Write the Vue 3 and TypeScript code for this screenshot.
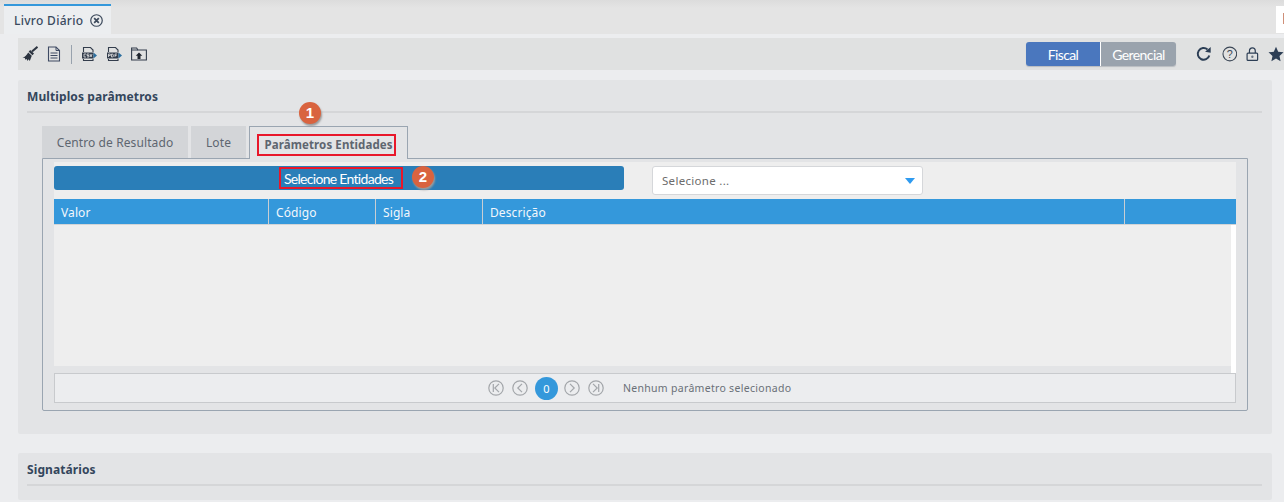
<script setup lang="ts">
const columns: { label: string; width: string }[] = [
  { label: 'Valor', width: '215px' },
  { label: 'Código', width: '107px' },
  { label: 'Sigla', width: '107px' },
  { label: 'Descrição', width: '642px' },
  { label: '', width: '1fr' },
]
const gridColumns = columns.map((c) => c.width).join(' ')
</script>

<template>
  <div class="app">
    <header class="topbar">
      <div class="tab-doc">
        <span>Livro Diário</span>
        <svg class="close" viewBox="0 0 14 14" width="13" height="13">
          <circle cx="7" cy="7" r="6.2" fill="none" stroke="#3d4a5c" stroke-width="1.3" />
          <path d="M4.5 4.500l5 5M9.500 4.500l-5 5" stroke="#3d4a5c" stroke-width="1.900" />
        </svg>
      </div>
      <div class="peek"><i></i></div>
    </header>

    <main class="content">
      <div class="toolbar">
        <div class="tools">
          <svg viewBox="0 0 16 16" width="16" height="16" class="t1">
            <path d="M15.500 .8l-5.500 4.700" stroke="#2c3440" stroke-width="2" fill="none" />
            <path d="M8.200 4l3.800 3.600-1.500 1.700-3.800-3.600z" fill="#2c3440" />
            <path d="M6.200 6.400l3.600 3.300-2 5.300-1.300-1.800-.9 1.700-1-1.900-1.300.8-.4-1.700L.5 11.600c2.600-.6 4.300-2.800 5.700-5.200z" fill="#2c3440" />
          </svg>
          <svg viewBox="0 0 14 16" width="14" height="16" class="t2">
            <path d="M1.500 1h7.500l3.500 3.500V15h-11z" fill="none" stroke="#3e4a63" stroke-width="1.100" />
            <path d="M9 1v3.500h3.500M3.500 7h7M3.500 9.500h7M3.500 12h7" fill="none" stroke="#3e4a63" stroke-width="1" />
          </svg>
          <span class="sep"></span>
          <svg viewBox="0 0 16 16" width="16" height="16" class="t3">
            <path d="M2.500 6V1.500h7l2.500 2.500v2M2.500 13v1.500h9.500V13" fill="none" stroke="#333d4c" stroke-width="1.100" />
            <rect x="1" y="6.500" width="11.500" height="6" fill="#333d4c" />
            <path d="M12.500 6.500L16 9.500l-3.500 3z" fill="#2d6f9f" />
            <path d="M5 8H3v3h2M8 8H6v1.500h2V11H6M9 8l1 3 1-3" stroke="#e4e5e5" stroke-width=".8" fill="none" />
          </svg>
          <svg viewBox="0 0 16 16" width="16" height="16" class="t4">
            <path d="M2.500 6V1.500h7l2.500 2.500v2M2.500 13v1.500h9.500V13" fill="none" stroke="#333d4c" stroke-width="1.100" />
            <rect x="1" y="6.500" width="11.500" height="6" fill="#333d4c" />
            <path d="M12.500 6.500L16 9.500l-3.500 3z" fill="#2d6f9f" />
            <path d="M2.500 11V8h1.800v1.500H2.500M5.500 8v3h1.300l.7-1-.7-2zM9 11V8h2M9 9.500h1.600" stroke="#e4e5e5" stroke-width=".8" fill="none" />
          </svg>
          <svg viewBox="0 0 16 14" width="16" height="14" class="t5">
            <path d="M.6 1h5l1.400 2h8.400v10H.6z" fill="none" stroke="#333d4c" stroke-width="1.100" />
            <path d="M.6 3h6.400" stroke="#333d4c" stroke-width="1" />
            <path d="M8 5.500l3.300 3.300H9.500V12h-3V8.800H4.700z" fill="#20262f" />
          </svg>
        </div>
        <div class="actions">
          <div class="switch">
            <button class="sw fiscal" type="button">Fiscal</button>
            <button class="sw gerencial" type="button">Gerencial</button>
          </div>
          <svg viewBox="0 0 16 16" width="16" height="16" class="refresh">
            <path d="M13.600 9.500A6 6 0 1 1 11.800 3.400" fill="none" stroke="#2c3e55" stroke-width="2" />
            <path d="M9.300 5.800L15 6.600 15 .8z" fill="#2c3e55" />
          </svg>
          <svg viewBox="0 0 16 16" width="16" height="16" class="help">
            <circle cx="8" cy="8" r="7" fill="none" stroke="#3a4655" stroke-width="1.100" />
            <text x="8" y="11.800" text-anchor="middle" class="qm">?</text>
          </svg>
          <svg viewBox="0 0 14 16" width="13" height="16" class="lock">
            <path d="M3.800 7V4.500a3.200 3.200 0 0 1 6.400 0V7" fill="none" stroke="#2c3e55" stroke-width="1.300" />
            <rect x="1.200" y="7" width="11.600" height="8" rx="1" fill="none" stroke="#2c3e55" stroke-width="1.300" />
            <circle cx="7" cy="11" r="1.300" fill="#6a7583" />
          </svg>
          <svg viewBox="0 0 16 16" width="16" height="16" class="star">
            <path d="M8 .8l2.200 4.900 5.300.6-4 3.600 1.100 5.300L8 12.500l-4.600 2.700 1.100-5.300-4-3.600 5.300-.6z" fill="#2c3e55" />
          </svg>
        </div>
      </div>

      <section class="panel first">
        <h2 class="panel-title">Multiplos parâmetros</h2>

        <div class="tabs-wrap">
          <span class="badge b1">1</span>
          <div class="tabs">
            <div class="tab t-centro">Centro de Resultado</div>
            <div class="tab t-lote">Lote</div>
            <div class="tab active"><span class="marked">Parâmetros Entidades</span></div>
          </div>

          <div class="tab-body">
            <div class="inner">
              <div class="controls">
                <button class="select-btn" type="button">
                  <span class="marked-btn">Selecione Entidades</span>
                  <span class="badge b2">2</span>
                </button>
                <div class="dropdown">
                  <span>Selecione ...</span>
                  <i class="caret"></i>
                </div>
              </div>

              <div class="thead" :style="{ gridTemplateColumns: gridColumns }">
                <div v-for="c in columns" :key="c.label" class="th">{{ c.label }}</div>
              </div>

              <div class="tbody">
                <div class="rows">
                  <div class="empty"></div>
                  <div class="hscroll"></div>
                </div>
                <div class="vscroll"></div>
              </div>

              <div class="pager">
                <svg viewBox="0 0 16 16" width="16" height="16" class="pg">
                  <circle cx="8" cy="8" r="7.200" />
                  <path d="M5.300 4v8M11 3.800L6.800 8l4.200 4.200" />
                </svg>
                <svg viewBox="0 0 16 16" width="16" height="16" class="pg">
                  <circle cx="8" cy="8" r="7.200" />
                  <path d="M10 3.800L5.800 8l4.200 4.200" />
                </svg>
                <span class="page">0</span>
                <svg viewBox="0 0 16 16" width="16" height="16" class="pg">
                  <circle cx="8" cy="8" r="7.200" />
                  <path d="M6 3.800L10.200 8 6 12.200" />
                </svg>
                <svg viewBox="0 0 16 16" width="16" height="16" class="pg">
                  <circle cx="8" cy="8" r="7.200" />
                  <path d="M10.700 4v8M5 3.800L9.200 8 5 12.200" />
                </svg>
                <span class="pager-text">Nenhum parâmetro selecionado</span>
              </div>
            </div>
          </div>
        </div>
      </section>

      <section class="panel second">
        <h2 class="panel-title">Signatários</h2>
      </section>
    </main>
  </div>
</template>

<style>
html,
body {
  margin: 0;
  background: #ecedef;
  overflow: hidden;
}
</style>

<style scoped>
.app {
  width: 1284px;
  height: 502px;
  overflow: hidden;
  font-family: "Noto Sans", "Open Sans", sans-serif;
  background: #ecedef;
  display: flex;
  flex-direction: column;
}
.topbar {
  height: 34px;
  flex: none;
  background: linear-gradient(#dcdcdc, #e4e4e4 8px);
  padding: 4px 0 0 4px;
  box-sizing: border-box;
  display: flex;
  justify-content: space-between;
  align-items: flex-start;
}
.tab-doc {
  width: 107px;
  height: 30px;
  box-sizing: border-box;
  border-top: 2px solid #3498db;
  background: #eceef0;
  padding: 1px 0 0 10px;
  display: flex;
  align-items: center;
  gap: 7px;
  font-size: 12px;
  font-weight: 500;
  color: #3a4a5e;
  letter-spacing: 0.3px;
}
.close {
  flex: none;
}
.peek {
  width: 8px;
  height: 27px;
  margin-top: 2px;
  background: #fff;
  position: relative;
}
.peek i {
  position: absolute;
  right: 0;
  top: 7px;
  width: 1px;
  height: 11px;
  background: #cf8f78;
}
.content {
  flex: 1;
  min-height: 0;
  margin-left: 4px;
  padding: 4px 0 0 14px;
  background: #ecedef;
}
.toolbar {
  height: 32px;
  background: #e0e1e1;
  display: flex;
  justify-content: space-between;
  align-items: center;
  overflow: hidden;
}
.tools {
  display: flex;
  align-items: center;
  padding-left: 4px;
}
.t2 {
  margin-left: 9px;
}
.sep {
  width: 1px;
  height: 19px;
  background: #98a2ad;
  margin: 0 9px 0 10px;
}
.t4 {
  margin-left: 9px;
}
.t5 {
  margin-left: 9px;
}
.actions {
  display: flex;
  align-items: center;
  width: 258px;
  flex: none;
}
.switch {
  display: flex;
  height: 24px;
  margin-right: 20px;
  border-radius: 3px;
  overflow: hidden;
  box-shadow: 0 1px 1px #b9bcc0;
  flex: none;
}
.sw {
  border: 0;
  padding: 0;
  height: 24px;
  color: #fff;
  font-family: "Lato", sans-serif;
  font-size: 14px;
  letter-spacing: -0.6px;
}
.fiscal {
  width: 75px;
  background: #4a77be;
  border-right: 1px solid #fff;
}
.gerencial {
  width: 75px;
  background: #9aa3ad;
}
.help {
  margin-left: 10px;
}
.lock {
  margin-left: 9px;
}
.star {
  margin-left: 9px;
  flex: none;
}
.qm {
  font-family: "Liberation Sans", sans-serif;
  font-size: 11px;
  fill: #3a4655;
}
.panel {
  width: 1254px;
  background: #e3e4e6;
  border-radius: 2px;
}
.first {
  height: 354px;
  margin-top: 10px;
}
.second {
  height: 47px;
  margin-top: 19px;
}
.panel-title {
  margin: 0 10px 0 9px;
  height: 33px;
  box-sizing: border-box;
  border-bottom: 2px solid #d5d6d8;
  padding-top: 8px;
  font-size: 12px;
  line-height: 17px;
  font-weight: 700;
  color: #34465c;
  letter-spacing: 0.1px;
}
.tabs-wrap {
  position: relative;
  margin: 13px 24px 0 24px;
}
.tabs {
  display: flex;
  align-items: flex-start;
  height: 32px;
  position: relative;
  gap: 3px;
}
.tab {
  height: 32px;
  box-sizing: border-box;
  background: #d3d5d8;
  color: #5e6670;
  font-size: 12px;
  display: flex;
  align-items: center;
  justify-content: center;
  letter-spacing: 0.1px;
}
.t-centro {
  width: 146px;
}
.t-lote {
  width: 55px;
}
.tab.active {
  width: 159px;
  height: 33px;
  background: #e3e4e6;
  border: 1px solid #9aa5b1;
  border-bottom: 0;
  position: relative;
  z-index: 1;
  font-weight: 700;
  font-size: 11.500px;
  padding: 2px 5px 0 0;
}
.marked {
  border: 2px solid #e8172a;
  padding: 1px 2px 2px 6px;
  line-height: 15px;
  width: 139px;
  box-sizing: border-box;
  white-space: nowrap;
  height: 22px;
  margin-top: 1px;
}
.tab-body {
  height: 253px;
  box-sizing: border-box;
  border: 1px solid #9aa5b1;
  border-radius: 0 0 2px 2px;
  padding: 3px 11px 7px 11px;
}
.inner {
  background: #eeeeee;
  height: 100%;
  display: flex;
  flex-direction: column;
}
.controls {
  height: 37px;
  flex: none;
  display: flex;
  align-items: flex-start;
  padding-top: 4px;
  box-sizing: border-box;
  gap: 28px;
}
.select-btn {
  width: 570px;
  height: 24px;
  border: 0;
  padding: 0;
  border-radius: 3px;
  background: #2a7eb8;
  color: #fff;
  font-family: "Lato", sans-serif;
  font-size: 14px;
  letter-spacing: -0.7px;
  position: relative;
  display: flex;
  justify-content: center;
}
.marked-btn {
  width: 124px;
  height: 22px;
  box-sizing: border-box;
  border: 2px solid #e8172a;
  padding-right: 4px;
  line-height: 19px;
  white-space: nowrap;
  display: block;
  margin: 1px 0 0 3px;
}
.dropdown {
  width: 271px;
  height: 29px;
  box-sizing: border-box;
  background: #fff;
  border: 1px solid #d5d7da;
  border-radius: 3px;
  display: flex;
  align-items: center;
  justify-content: space-between;
  padding: 0 7px 0 9px;
  color: #6c6c6c;
  font-size: 11.500px;
  letter-spacing: 0.3px;
}
.caret {
  width: 0;
  height: 0;
  border-left: 5px solid transparent;
  border-right: 5px solid transparent;
  border-top: 6px solid #2f9bf0;
  margin-top: 1px;
}
.thead {
  flex: none;
  height: 25px;
  display: grid;
  background: #3498db;
}
.th {
  color: #f2f7fb;
  font-size: 12px;
  line-height: 27px;
  padding-left: 7px;
  border-right: 1px solid #c9ced3;
  box-sizing: border-box;
  letter-spacing: 0.1px;
  height: 25px;
}
.th:last-child {
  border-right: 0;
}
.tbody {
  flex: 1;
  min-height: 0;
  display: flex;
  border-top: 1px solid #d2d4d6;
}
.rows {
  flex: 1;
  display: flex;
  flex-direction: column;
}
.empty {
  flex: 1;
  background: #eeeeee;
}
.hscroll {
  height: 7px;
  background: #e3e4e6;
}
.vscroll {
  width: 5px;
  background: #fff;
}
.pager {
  flex: none;
  height: 30px;
  box-sizing: border-box;
  border: 1px solid #c8cacd;
  background: #ecedef;
  display: flex;
  align-items: center;
  padding-left: 433px;
  gap: 8px;
}
.pg {
  flex: none;
}
.pg circle,
.pg path {
  fill: none;
  stroke: #a3a6aa;
  stroke-width: 1.200;
}
.page {
  width: 23px;
  height: 23px;
  border-radius: 50%;
  background: #3498db;
  color: #fff;
  font-size: 11px;
  text-align: center;
  line-height: 23px;
  flex: none;
  margin: 0 -2px 0 -1px;
}
.pager-text {
  margin-left: 11px;
  font-size: 10.500px;
  color: #6a7078;
  letter-spacing: 0.3px;
}
.badge {
  position: absolute;
  width: 22px;
  height: 22px;
  border-radius: 50%;
  background: #d9633f;
  color: #fff;
  font-family: "Liberation Sans", sans-serif;
  font-weight: 700;
  font-size: 15px;
  line-height: 21px;
  text-align: center;
  letter-spacing: 0;
  box-shadow: 1px 2px 2px #9b9b9b;
  z-index: 2;
}
.b1 {
  left: 257px;
  top: -24px;
}
.b2 {
  left: 358px;
  top: 0;
}
</style>
